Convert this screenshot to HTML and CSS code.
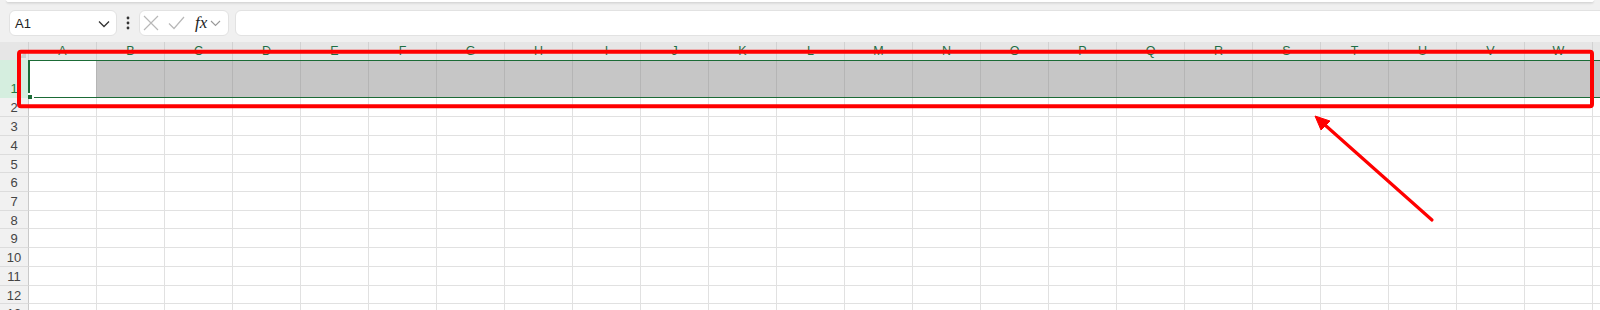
FILE: index.html
```html
<!DOCTYPE html>
<html lang="en">
<head>
  <meta charset="UTF-8" />
  <title>Sheet - row 1 selected</title>
  <link rel="stylesheet" href="styles.css">
</head>
<body>
  <div class="topbar"></div>

  <div class="formula-row">
    <div class="namebox">
      <span>A1</span>
      <svg class="chev" width="12" height="8" viewBox="0 0 12 8"><path d="M1 1.5 L6 6.5 L11 1.5" fill="none" stroke="#333" stroke-width="1.3"/></svg>
    </div>
    <div class="more">
      <svg width="4" height="14" viewBox="0 0 4 14"><circle cx="2" cy="2" r="1.4" fill="#333"/><circle cx="2" cy="7" r="1.4" fill="#333"/><circle cx="2" cy="12" r="1.4" fill="#333"/></svg>
    </div>
    <div class="fbtns">
      <svg width="16" height="16" viewBox="0 0 16 16"><path d="M1 1 L15 15 M15 1 L1 15" stroke="#b8b8b8" stroke-width="1.2"/></svg>
      <svg width="17" height="14" viewBox="0 0 17 14"><path d="M1 7.5 L6 12.5 L16 1" fill="none" stroke="#b8b8b8" stroke-width="1.2"/></svg>
      <span class="fx">fx</span>
      <svg width="11" height="7" viewBox="0 0 11 7"><path d="M1 1 L5.5 5.5 L10 1" fill="none" stroke="#999" stroke-width="1.1"/></svg>
    </div>
    <div class="finput"></div>
  </div>

  <div class="sheet">
    <div class="colhead">
      <div class="corner"></div>
      <div class="ch">A</div><div class="ch">B</div><div class="ch">C</div><div class="ch">D</div>
      <div class="ch">E</div><div class="ch">F</div><div class="ch">G</div><div class="ch">H</div>
      <div class="ch">I</div><div class="ch">J</div><div class="ch">K</div><div class="ch">L</div>
      <div class="ch">M</div><div class="ch">N</div><div class="ch">O</div><div class="ch">P</div>
      <div class="ch">Q</div><div class="ch">R</div><div class="ch">S</div><div class="ch">T</div>
      <div class="ch">U</div><div class="ch">V</div><div class="ch">W</div><div class="ch"></div>
    </div>

    <div class="row first">
      <div class="rh">1</div>
      <div class="sel">
        <div class="a1"></div>
        <div class="rest"></div>
      </div>
    </div>

    <div class="row"><div class="rh">2</div><div class="cells"></div></div>
    <div class="row"><div class="rh">3</div><div class="cells"></div></div>
    <div class="row"><div class="rh">4</div><div class="cells"></div></div>
    <div class="row short"><div class="rh">5</div><div class="cells"></div></div>
    <div class="row"><div class="rh">6</div><div class="cells"></div></div>
    <div class="row"><div class="rh">7</div><div class="cells"></div></div>
    <div class="row short"><div class="rh">8</div><div class="cells"></div></div>
    <div class="row"><div class="rh">9</div><div class="cells"></div></div>
    <div class="row"><div class="rh">10</div><div class="cells"></div></div>
    <div class="row"><div class="rh">11</div><div class="cells"></div></div>
    <div class="row short"><div class="rh">12</div><div class="cells"></div></div>
    <div class="row"><div class="rh">13</div><div class="cells"></div></div>
  </div>

  <!-- annotation drawn over the sheet -->
  <svg class="annot" width="1600" height="310" viewBox="0 0 1600 310">
    <rect x="19" y="51.8" width="1573" height="54.5" rx="2" fill="none" stroke="#ff0000" stroke-width="4"/>
    <line x1="1432" y1="220" x2="1325" y2="125" stroke="#ff0000" stroke-width="3.2" stroke-linecap="round"/>
    <polygon points="1315,116 1330,121 1321,130" fill="#ff0000" stroke="#ff0000" stroke-width="1" stroke-linejoin="round"/>
  </svg>
</body>
</html>
```

FILE: styles.css
```css
body {
  margin: 0;
  width: 1600px;
  height: 310px;
  overflow: hidden;
  background: #f0f0f0;
  font-family: 'Liberation Sans', Arial, sans-serif;
  position: relative;
}
.topbar {
  height: 2px;
  background: #fff;
  border-bottom: 1px solid #d8d8d8;
  box-shadow: 0 1px 2px rgba(0,0,0,0.08);
  margin: 0 6px;
  border-radius: 0 0 6px 6px;
}
.formula-row {
  height: 39px;
  box-sizing: border-box;
  padding-top: 7px;
  display: flex;
  align-items: flex-start;
}
.namebox {
  margin-left: 9px;
  width: 108px;
  height: 26px;
  box-sizing: border-box;
  background: #fff;
  border: 1px solid #e2e2e2;
  border-radius: 6px;
  display: flex;
  align-items: center;
  justify-content: space-between;
  padding: 0 6px 0 5px;
  font-size: 13px;
  color: #222;
}
.chev { margin-top: 1px; }
.more {
  width: 22px;
  height: 26px;
  display: flex;
  align-items: center;
  justify-content: center;
}
.fbtns {
  width: 90px;
  height: 26px;
  box-sizing: border-box;
  background: #fff;
  border: 1px solid #e2e2e2;
  border-radius: 6px;
  display: flex;
  align-items: center;
  gap: 9px;
  padding-left: 3px;
}
.fbtns .fx {
  font-family: 'Liberation Serif', 'Times New Roman', serif;
  font-style: italic;
  font-size: 17px;
  color: #222;
  margin-left: 1px;
  margin-right: -6px;
}
.finput {
  flex: 1;
  margin-left: 6px;
  margin-right: -10px;
  height: 26px;
  background: #fff;
  border: 1px solid #e2e2e2;
  border-radius: 6px;
  box-sizing: border-box;
}
.sheet {
  background: #fff;
}
.colhead {
  display: flex;
  height: 18px;
  background: #e6e6e6;
}
.corner {
  flex: 0 0 29px;
  box-sizing: border-box;
  border-right: 1px solid #d2d2d2;
  position: relative;
}
.corner::after {
  content: "";
  position: absolute;
  right: 2px;
  bottom: 2px;
  border-left: 7px solid transparent;
  border-bottom: 7px solid #cfcfcf;
}
.ch {
  flex: 0 0 68px;
  box-sizing: border-box;
  border-right: 1px solid #d2d2d2;
  text-align: center;
  font-size: 12.5px;
  line-height: 19px;
  color: #1c6f45;
}
.row {
  display: flex;
  height: 19px;
}
.row.short { height: 18px; }
.rh {
  flex: 0 0 29px;
  box-sizing: border-box;
  background: #f1f1f1;
  border-right: 1px solid #c9c9c9;
  border-bottom: 1px solid #dcdcdc;
  text-align: center;
  font-size: 13px;
  color: #444;
  display: flex;
  align-items: center;
  justify-content: center;
  padding-top: 1px;
}
.cells {
  flex: 1;
  border-bottom: 1px solid #e1e1e1;
  background: repeating-linear-gradient(to right, transparent 0 67px, #e1e1e1 67px 68px);
}
.row.first { height: 38px; }
.row.first .rh {
  flex: 0 0 28px;
  border: none;
  background: #d5eedf;
  color: #1f7a43;
  align-items: flex-end;
  padding-bottom: 2px;
}
.sel {
  flex: 1;
  display: flex;
  position: relative;
  border-top: 1px solid #1b6b36;
  border-bottom: 1px solid #1b6b36;
  border-left: 2px solid #1b6b36;
}
.sel::after {
  content: "";
  position: absolute;
  left: -2px;
  bottom: -2px;
  width: 4px;
  height: 4px;
  background: #1b6b36;
  box-shadow: 1px -1px 0 1px #fff;
}
.a1 {
  flex: 0 0 66px;
  background: #fff;
}
.rest {
  flex: 1;
  background: repeating-linear-gradient(to right, #b5b5b5 0 1px, #c6c6c6 1px 68px);
}
.annot {
  position: absolute;
  left: 0;
  top: 0;
  pointer-events: none;
}
```
